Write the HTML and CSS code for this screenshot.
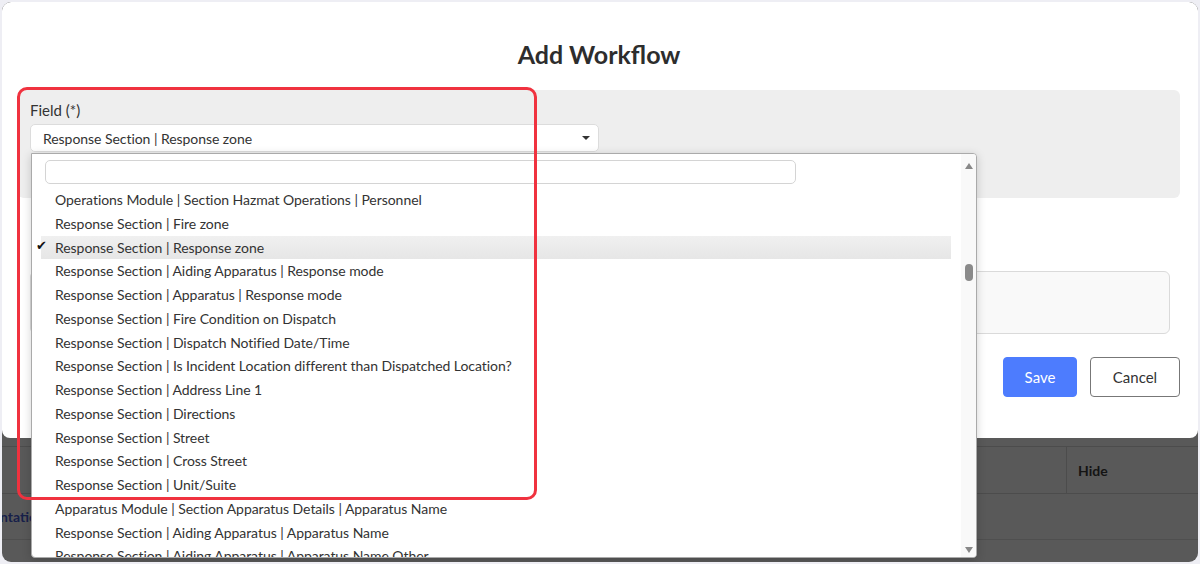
FILE: index.html
```html
<!DOCTYPE html>
<html lang="en">
<head>
<meta charset="utf-8">
<title>Add Workflow</title>
<link rel="stylesheet" href="styles.css">
</head>
<body>
<div class="frame">
  <div class="modal">
    <h1 class="title">Add Workflow</h1>
    <div class="panel">
      <div class="label">Field (*)</div>
      <div class="select">
        <span class="select-text">Response Section | Response zone</span>
        <span class="caret"></span>
      </div>
    </div>
    <div class="notes">
      <div class="textarea"></div>
    </div>
    <div class="actions">
      <button class="btn btn-save">Save</button>
      <button class="btn btn-cancel">Cancel</button>
    </div>
  </div>

  <div class="table">
    <div class="thead">
      <div class="th th-main"></div>
      <div class="th th-hide">Hide</div>
    </div>
    <div class="trow">
      <span class="tlink">ntation</span>
    </div>
  </div>

  <div class="dropdown">
    <div class="dd-main">
      <div class="dd-search"><div class="dd-input"></div></div>
      <ul class="dd-list">
        <li class="dd-item">Operations Module | Section Hazmat Operations | Personnel</li>
        <li class="dd-item">Response Section | Fire zone</li>
        <li class="dd-item is-selected"><span class="check">✔</span>Response Section | Response zone</li>
        <li class="dd-item">Response Section | Aiding Apparatus | Response mode</li>
        <li class="dd-item">Response Section | Apparatus | Response mode</li>
        <li class="dd-item">Response Section | Fire Condition on Dispatch</li>
        <li class="dd-item">Response Section | Dispatch Notified Date/Time</li>
        <li class="dd-item">Response Section | Is Incident Location different than Dispatched Location?</li>
        <li class="dd-item">Response Section | Address Line 1</li>
        <li class="dd-item">Response Section | Directions</li>
        <li class="dd-item">Response Section | Street</li>
        <li class="dd-item">Response Section | Cross Street</li>
        <li class="dd-item">Response Section | Unit/Suite</li>
        <li class="dd-item">Apparatus Module | Section Apparatus Details | Apparatus Name</li>
        <li class="dd-item">Response Section | Aiding Apparatus | Apparatus Name</li>
        <li class="dd-item">Response Section | Aiding Apparatus | Apparatus Name Other</li>
      </ul>
    </div>
    <div class="dd-scroll">
      <span class="arrow-up"></span>
      <span class="thumb"></span>
      <span class="arrow-down"></span>
    </div>
  </div>

  <div class="annotation"></div>
</div>
</body>
</html>
```

FILE: styles.css
```css
* { box-sizing: border-box; }

html, body {
  margin: 0;
  padding: 0;
}

body {
  background: #eeeef4;
  font-family: Lato, "Open Sans", Arial, sans-serif;
  color: #333;
  width: 1200px;
  height: 564px;
  overflow: hidden;
}

.frame {
  position: relative;
  margin: 2px;
  width: 1196px;
  height: 560px;
  border-radius: 9px;
  overflow: hidden;
  background: #595959;
  display: flex;
  flex-direction: column;
}

/* ---------- modal ---------- */
.modal {
  background: #fff;
  height: 436px;
  flex: none;
  border-radius: 8px;
  padding: 37px 18px 0 16px;
  display: flex;
  flex-direction: column;
}

.title {
  margin: 0;
  font-size: 25px;
  line-height: 30px;
  font-weight: 700;
  text-align: center;
  color: #2d2d2d;
}

.panel {
  margin-top: 21px;
  height: 108px;
  background: #eeeeee;
  border-radius: 6px;
  padding: 10px 12px 0;
}

.label {
  font-size: 15px;
  line-height: 20px;
  color: #333;
  margin-bottom: 4px;
}

.select {
  width: 569px;
  height: 28px;
  background: #fff;
  border: 1px solid #dcdcdc;
  border-radius: 5px;
  display: flex;
  align-items: center;
  justify-content: space-between;
  padding: 0 8px 0 12px;
  font-size: 14px;
  letter-spacing: -0.05px;
  color: #333;
}

.caret {
  width: 0;
  height: 0;
  border-left: 4px solid transparent;
  border-right: 4px solid transparent;
  border-top: 4px solid #333;
}

.notes {
  margin-top: 73px;
  padding: 0 10px 0 12px;
}

.textarea {
  height: 63px;
  background: #f9f9f9;
  border: 1px solid #dadada;
  border-radius: 6px;
}

.actions {
  margin-top: 23px;
  display: flex;
  justify-content: flex-end;
  gap: 13px;
}

.btn {
  height: 40px;
  font-family: inherit;
  font-size: 15px;
  border-radius: 4px;
  cursor: pointer;
}

.btn-save {
  width: 74px;
  background: #4d7cfe;
  border: 1px solid #4d7cfe;
  color: #fff;
}

.btn-cancel {
  width: 90px;
  background: #fff;
  border: 1px solid #777;
  color: #333;
}

/* ---------- table behind overlay ---------- */
.table {
  flex: 1;
  padding-top: 8px;
}

.thead {
  display: flex;
  height: 48px;
  border-top: 1px solid #4c4c4c;
  border-bottom: 1px solid #4c4c4c;
}

.th-main {
  flex: none;
  width: 1065px;
  border-right: 1px solid #4c4c4c;
}

.th-hide {
  flex: 1;
  display: flex;
  align-items: center;
  padding-left: 11px;
  font-size: 14px;
  font-weight: 700;
  color: #141414;
}

.trow {
  height: 46px;
  display: flex;
  align-items: center;
  border-bottom: 1px solid #4f4f4f;
}

.tlink {
  margin-left: -2px;
  font-size: 14px;
  font-weight: 700;
  color: #17204a;
}

/* ---------- dropdown (overlay) ---------- */
.dropdown {
  position: absolute;
  left: 29px;
  top: 151px;
  width: 946px;
  height: 405px;
  background: #fff;
  border: 1px solid #aaa;
  border-radius: 0 4px 4px 4px;
  box-shadow: 0 2px 10px rgba(0, 0, 0, 0.18);
  display: flex;
  overflow: hidden;
}

.dd-main {
  flex: 1;
  min-width: 0;
  padding: 0 10px 0 9px;
}

.dd-search {
  padding: 6px 0 4px 4px;
}

.dd-input {
  width: 751px;
  height: 24px;
  border: 1px solid #d4d4d4;
  border-radius: 5px;
  background: #fff;
}

.dd-list {
  list-style: none;
  margin: 0;
  padding: 0;
}

.dd-item {
  position: relative;
  font-size: 14px;
  letter-spacing: -0.05px;
  line-height: 23.75px;
  height: 23.75px;
  padding-left: 14px;
  color: #333;
  white-space: nowrap;
}

.dd-item.is-selected {
  background: linear-gradient(#f0f0f0, #e6e6e6);
}

.check {
  position: absolute;
  left: -5px;
  top: -2px;
  font-size: 13px;
  color: #111;
}

.dd-scroll {
  flex: none;
  width: 15px;
  background: #f9f9f9;
  display: flex;
  flex-direction: column;
  align-items: center;
  padding: 9px 0 4px;
}

.arrow-up {
  width: 0;
  height: 0;
  border-left: 4.5px solid transparent;
  border-right: 4.5px solid transparent;
  border-bottom: 6px solid #888;
}

.thumb {
  margin-top: 95px;
  width: 8px;
  height: 17px;
  border-radius: 4px;
  background: #8a8a8a;
}

.arrow-down {
  margin-top: auto;
  width: 0;
  height: 0;
  border-left: 4.5px solid transparent;
  border-right: 4.5px solid transparent;
  border-top: 6px solid #888;
}

/* ---------- red annotation outline ---------- */
.annotation {
  position: absolute;
  left: 15px;
  top: 85px;
  width: 520px;
  height: 413px;
  border: 3px solid #f0323f;
  border-radius: 10px;
  pointer-events: none;
}
```
